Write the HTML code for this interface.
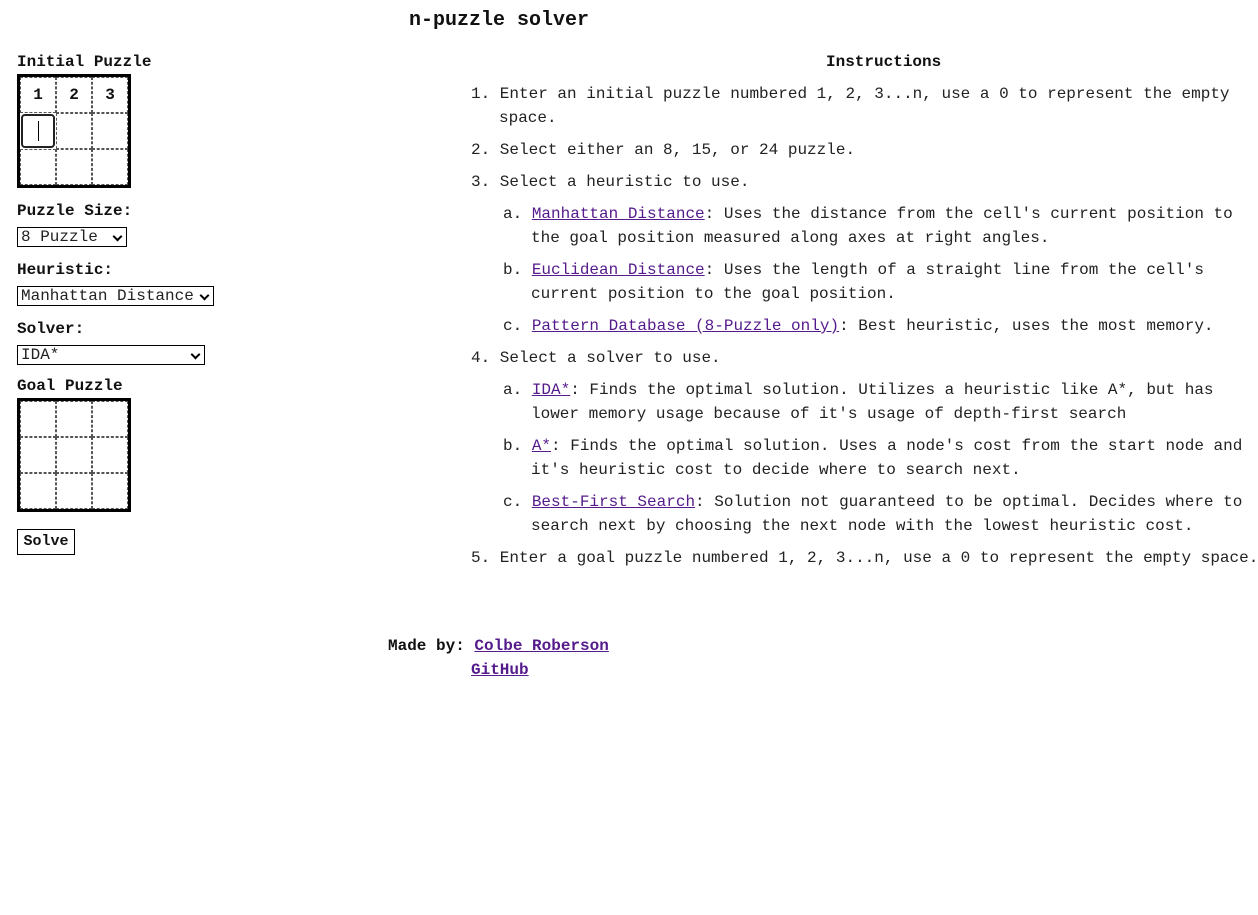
<!DOCTYPE html>
<html><head><meta charset="utf-8"><style>
body{margin:0;width:1258px;height:915px;background:#fff;font-family:"Liberation Mono","Courier New",monospace;font-size:16px;color:#111;position:relative;overflow:hidden}
.a{position:absolute;white-space:nowrap}
.grid{position:absolute;left:17px;width:108px;height:108px;border:3px solid #000;display:grid;grid-template-columns:repeat(3,36px);grid-template-rows:repeat(3,36px)}
.grid div{border:1px dashed #555;box-sizing:border-box;font-weight:bold;font-size:16px;display:flex;align-items:center;justify-content:center;background:#fff}
.sel{position:absolute;left:17px;height:20px;border:1px solid #000;box-sizing:border-box;font-size:16px;padding-left:3px;line-height:18px;background:#fff;color:#222}
.sel:after{content:"";position:absolute;right:5px;top:5px;width:5px;height:5px;border-right:2px solid #000;border-bottom:2px solid #000;transform:rotate(45deg)}
a{color:#551a8b;text-decoration:underline}
.l{position:absolute;white-space:nowrap;line-height:24px;color:#222}
</style></head><body>
<div class="a" style="left:409px;top:9px;font-size:20px;font-weight:bold">n-puzzle solver</div>
<div class="a" style="left:17px;top:53px;font-weight:bold">Initial Puzzle</div>
<div class="grid" style="top:74px">
<div>1</div><div>2</div><div>3</div>
<div style="border:2px solid #222;border-radius:4px;margin:1px"><span style="width:1px;height:20px;background:#000;display:block"></span></div><div></div><div></div>
<div></div><div></div><div></div></div>
<div class="a" style="left:17px;top:202px;font-weight:bold">Puzzle Size:</div>
<div class="sel" style="top:227px;width:110px">8 Puzzle</div>
<div class="a" style="left:17px;top:261px;font-weight:bold">Heuristic:</div>
<div class="sel" style="top:286px;width:197px">Manhattan Distance</div>
<div class="a" style="left:17px;top:320px;font-weight:bold">Solver:</div>
<div class="sel" style="top:345px;width:188px">IDA*</div>
<div class="a" style="left:17px;top:377px;font-weight:bold">Goal Puzzle</div>
<div class="grid" style="top:398px">
<div></div><div></div><div></div><div></div><div></div><div></div><div></div><div></div><div></div></div>
<div class="a" style="left:17px;top:529px;width:56px;height:24px;border:1px solid #000;font-weight:bold;font-size:15px;line-height:24px;text-align:center">Solve</div>

<div class="a" style="left:826px;top:53px;font-weight:bold">Instructions</div>
<div class="l" style="left:471px;top:82px">1. Enter an initial puzzle numbered 1, 2, 3...n, use a 0 to represent the empty</div>
<div class="l" style="left:499px;top:106px">space.</div>
<div class="l" style="left:471px;top:138px">2. Select either an 8, 15, or 24 puzzle.</div>
<div class="l" style="left:471px;top:170px">3. Select a heuristic to use.</div>
<div class="l" style="left:503px;top:202px">a. <a>Manhattan Distance</a>: Uses the distance from the cell's current position to</div>
<div class="l" style="left:531px;top:226px">the goal position measured along axes at right angles.</div>
<div class="l" style="left:503px;top:258px">b. <a>Euclidean Distance</a>: Uses the length of a straight line from the cell's</div>
<div class="l" style="left:531px;top:282px">current position to the goal position.</div>
<div class="l" style="left:503px;top:314px">c. <a>Pattern Database (8-Puzzle only)</a>: Best heuristic, uses the most memory.</div>
<div class="l" style="left:471px;top:346px">4. Select a solver to use.</div>
<div class="l" style="left:503px;top:378px">a. <a>IDA*</a>: Finds the optimal solution. Utilizes a heuristic like A*, but has</div>
<div class="l" style="left:531px;top:402px">lower memory usage because of it's usage of depth-first search</div>
<div class="l" style="left:503px;top:434px">b. <a>A*</a>: Finds the optimal solution. Uses a node's cost from the start node and</div>
<div class="l" style="left:531px;top:458px">it's heuristic cost to decide where to search next.</div>
<div class="l" style="left:503px;top:490px">c. <a>Best-First Search</a>: Solution not guaranteed to be optimal. Decides where to</div>
<div class="l" style="left:531px;top:514px">search next by choosing the next node with the lowest heuristic cost.</div>
<div class="l" style="left:471px;top:546px">5. Enter a goal puzzle numbered 1, 2, 3...n, use a 0 to represent the empty space.</div>

<div class="l" style="left:388px;top:634px;font-weight:bold;color:#111">Made by: <a>Colbe Roberson</a></div>
<div class="l" style="left:471px;top:658px;font-weight:bold"><a>GitHub</a></div>
</body></html>
